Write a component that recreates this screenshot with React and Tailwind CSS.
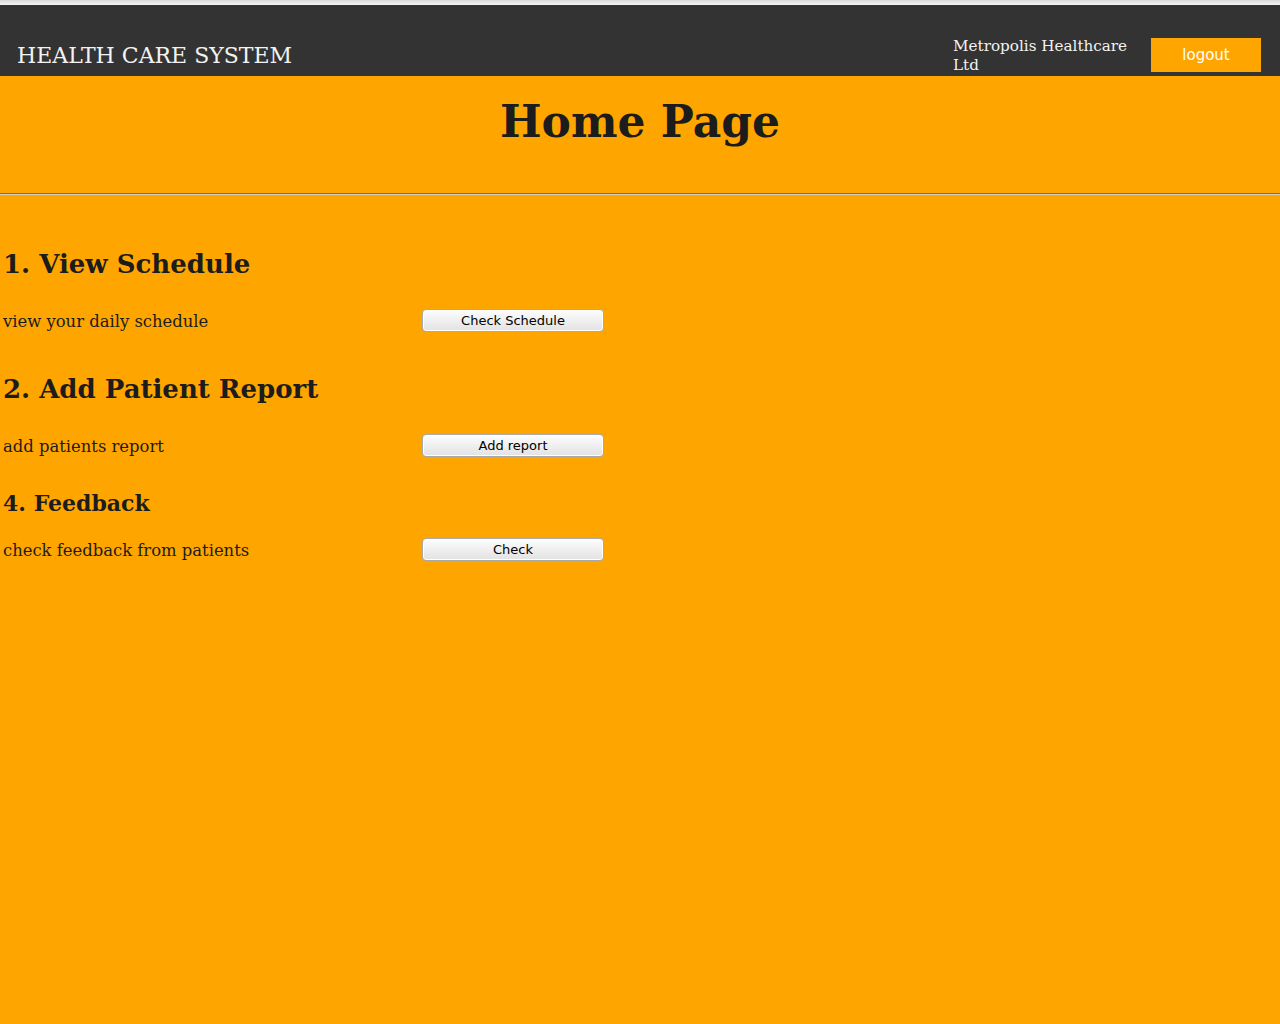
const serif = { fontFamily: '"DejaVu Serif", serif' };

function GrayButton({ children }) {
  return (
    <button
      className="w-[182px] h-[23px] rounded-[4px] border border-[#a9a9a9] bg-gradient-to-b from-[#fdfdfd] to-[#e2e2e2] text-[13px] text-black leading-none shadow-[inset_0_0_0_1px_#ffffff]"
      style={{ fontFamily: '"DejaVu Sans", sans-serif' }}
    >
      {children}
    </button>
  );
}

function Row({ label, action }) {
  return (
    <div className="flex items-center h-[23px]">
      <div className="w-[422px] pl-[3px] pt-[4px] text-[16.4px] text-[#1c1c1c]">{label}</div>
      <GrayButton>{action}</GrayButton>
    </div>
  );
}

export default function App() {
  return (
    <div className="min-h-[1024px] bg-[#ffa500]" style={serif}>
      <div className="h-[5px] bg-gradient-to-b from-[#d9d9d9] to-[#f5f5f5]" />
      <header className="h-[71px] bg-[#333333] flex items-end justify-between">
        <div className="pl-[17px] pb-[9px] text-[22px] text-[#f2f2f2] leading-none">HEALTH CARE SYSTEM</div>
        <div className="flex items-end gap-[20px] pr-[19px]">
          <div className="w-[178px] mb-[1px] text-[15.2px] leading-[19px] text-[#f2f2f2]">Metropolis Healthcare Ltd</div>
          <button
            className="w-[110px] h-[34px] mb-[4px] bg-[#ffa500] text-white text-[15px]"
            style={{ fontFamily: '"DejaVu Sans", sans-serif' }}
          >
            logout
          </button>
        </div>
      </header>

      <h1 className="text-center text-[44px] font-bold text-[#1c1c1c] leading-none pt-[24px]">Home Page</h1>
      <hr className="mt-[49px] border-t border-t-[#6e6e6e] border-b border-b-[#d0d0d0] h-0" />

      <h2 className="mt-[56px] pl-[3px] text-[26px] font-bold text-[#1c1c1c] leading-none">1. View Schedule</h2>
      <div className="mt-[32px]">
        <Row label="view your daily schedule" action="Check Schedule" />
      </div>

      <h2 className="mt-[44px] pl-[3px] text-[26px] font-bold text-[#1c1c1c] leading-none">2. Add Patient Report</h2>
      <div className="mt-[32px]">
        <Row label="add patients report" action="Add report" />
      </div>

      <h3 className="mt-[35px] pl-[3px] text-[22px] font-bold text-[#1c1c1c] leading-none">4. Feedback</h3>
      <div className="mt-[24px]">
        <Row label="check feedback from patients" action="Check" />
      </div>
    </div>
  );
}
